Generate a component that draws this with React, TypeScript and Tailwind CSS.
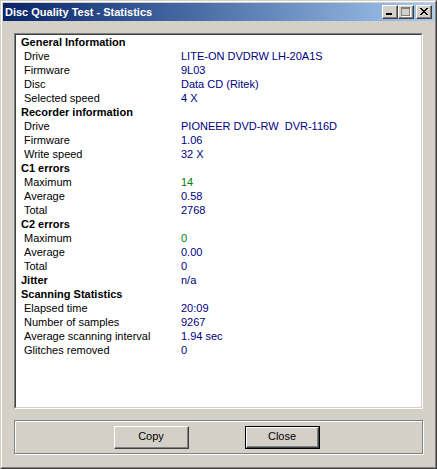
import React from 'react';

type Row = {
  label: string;
  value?: string;
  heading?: boolean;
  green?: boolean;
};

const rows: Row[] = [
  { label: 'General Information', heading: true },
  { label: 'Drive', value: 'LITE-ON DVDRW LH-20A1S' },
  { label: 'Firmware', value: '9L03' },
  { label: 'Disc', value: 'Data CD (Ritek)' },
  { label: 'Selected speed', value: '4 X' },
  { label: 'Recorder information', heading: true },
  { label: 'Drive', value: 'PIONEER DVD-RW  DVR-116D' },
  { label: 'Firmware', value: '1.06' },
  { label: 'Write speed', value: '32 X' },
  { label: 'C1 errors', heading: true },
  { label: 'Maximum', value: '14', green: true },
  { label: 'Average', value: '0.58' },
  { label: 'Total', value: '2768' },
  { label: 'C2 errors', heading: true },
  { label: 'Maximum', value: '0', green: true },
  { label: 'Average', value: '0.00' },
  { label: 'Total', value: '0' },
  { label: 'Jitter', value: 'n/a', heading: true },
  { label: 'Scanning Statistics', heading: true },
  { label: 'Elapsed time', value: '20:09' },
  { label: 'Number of samples', value: '9267' },
  { label: 'Average scanning interval', value: '1.94 sec' },
  { label: 'Glitches removed', value: '0' },
];

function CaptionButton({ children, disabled }: { children: React.ReactNode; disabled?: boolean }) {
  return (
    <div className="w-[16px] h-[14px] bg-[#d4d0c8] border border-t-white border-l-white border-r-[#404040] border-b-[#404040]">
      <div
        className={`w-full h-full border-r border-b border-[#808080] flex items-center justify-center ${
          disabled ? 'text-[#808080]' : 'text-black'
        }`}
      >
        {children}
      </div>
    </div>
  );
}

function PushButton({ label, isDefault }: { label: string; isDefault?: boolean }) {
  return (
    <div className={`w-[75px] h-[23px] ${isDefault ? 'border border-black' : ''}`}>
      <div className="w-full h-full border border-t-white border-l-white border-r-[#404040] border-b-[#404040] bg-[#d4d0c8]">
        <div className="w-full h-full border-r border-b border-[#808080] flex items-center justify-center text-[11px] text-black">
          {label}
        </div>
      </div>
    </div>
  );
}

export default function App() {
  return (
    <div
      className="w-[437px] h-[469px] bg-[#d4d0c8] border border-t-[#d4d0c8] border-l-[#d4d0c8] border-r-[#404040] border-b-[#404040]"
      style={{ fontFamily: '"Liberation Sans", Arial, sans-serif' }}
    >
      <div className="h-full border border-t-white border-l-white border-r-[#808080] border-b-[#808080] p-px flex flex-col">
        {/* title bar */}
        <div className="h-[18px] flex items-center bg-gradient-to-r from-[#0a246a] to-[#a6caf0] pl-[2px] pr-[2px]">
          <span className="text-white font-bold text-[11px] leading-none flex-1">
            Disc Quality Test - Statistics
          </span>
          <div className="flex items-center">
            <CaptionButton>
              <div className="w-[6px] h-[2px] bg-black mt-[5px] mr-[1px]" />
            </CaptionButton>
            <CaptionButton disabled>
              <div className="w-[9px] h-[9px] border border-t-2 border-[#808080] shadow-[1px_1px_0_white]" />
            </CaptionButton>
            <div className="ml-[2px]">
              <CaptionButton>
                <svg width="8" height="7" viewBox="0 0 8 7" shapeRendering="crispEdges">
                  <path
                    d="M0 0h2v1H0zM6 0h2v1H6zM1 1h2v1H1zM5 1h2v1H5zM2 2h4v1H2zM3 3h2v1H3zM2 4h4v1H2zM1 5h2v1H1zM5 5h2v1H5zM0 6h2v1H0zM6 6h2v1H6z"
                    fill="black"
                  />
                </svg>
              </CaptionButton>
            </div>
          </div>
        </div>

        <div className="px-[11px] pt-[12px] flex flex-col">
          {/* statistics panel */}
          <div className="h-[376px] border border-t-[#808080] border-l-[#808080] border-r-white border-b-white">
            <div className="h-full border border-t-[#404040] border-l-[#404040] border-r-[#d4d0c8] border-b-[#d4d0c8] bg-white pl-[5px]">
              {rows.map((row, i) => (
                <div key={i} className="grid grid-cols-[160px_1fr] h-[14px] items-center text-[11px] leading-[14px]">
                  <span className={row.heading ? 'font-bold text-black' : 'pl-[3px] text-black'}>{row.label}</span>
                  {row.value ? (
                    <span className={`whitespace-pre ${row.green ? 'text-[#008000]' : 'text-[#000080]'}`}>
                      {row.value}
                    </span>
                  ) : (
                    <span />
                  )}
                </div>
              ))}
            </div>
          </div>

          {/* button group */}
          <div className="mt-[11px] h-[34px] border border-[#808080] shadow-[inset_1px_1px_0_white,1px_1px_0_white] flex items-center pl-[99px] gap-[56px]">
            <PushButton label="Copy" />
            <PushButton label="Close" isDefault />
          </div>
        </div>
      </div>
    </div>
  );
}
